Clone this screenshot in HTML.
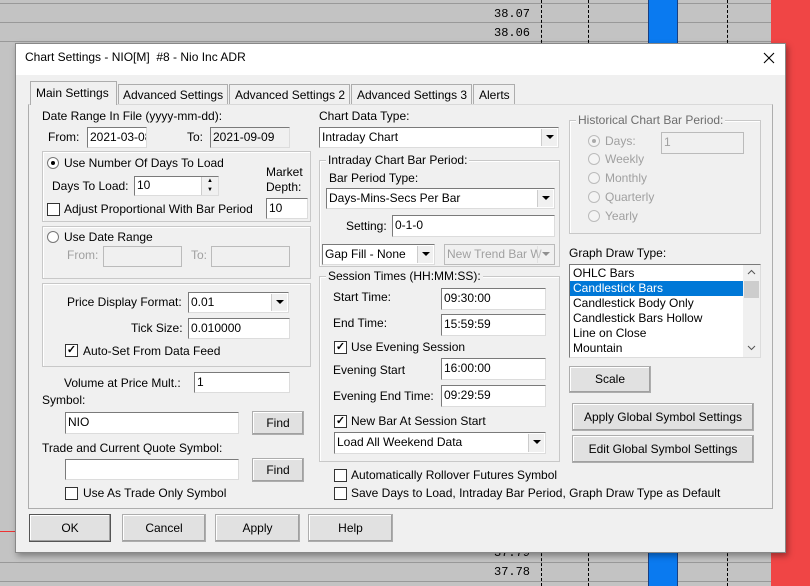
<!DOCTYPE html>
<html><head><meta charset="utf-8"><style>
*{box-sizing:border-box;margin:0;padding:0}
body{width:810px;height:586px;position:relative;overflow:hidden;background:#c3c3c3;font-family:"Liberation Sans",Arial,sans-serif;font-size:12px;color:#000}
.a{position:absolute}
.t{position:absolute;white-space:nowrap;line-height:15px}
.g{color:#a0a0a0}
.in{position:absolute;background:#fff;border:1px solid;border-color:#7a7a7a #dcdcdc #dcdcdc #7a7a7a;padding:2px 2px;line-height:15px;white-space:nowrap;overflow:hidden}
.dis{background:#f0f0f0}
.btn{position:absolute;background:#e1e1e1;border:1px solid #adadad;box-shadow:inset -1px -1px 0 #a0a0a0,inset 1px 1px 0 #fff;text-align:center;white-space:nowrap}
.grp{position:absolute;border:1px solid #c8c8c8;box-shadow:inset 1px 1px 0 #fff}
.lg{position:absolute;background:#f0f0f0;padding:0 2px;top:-8px;left:6px;line-height:15px;white-space:nowrap}
.cb{position:absolute;width:13px;height:13px;border:1px solid #333;background:#fff;font-size:11px;line-height:11px;text-align:center;font-weight:bold}
.rd{position:absolute;width:12px;height:12px;border-radius:50%;border:1px solid #777;background:#fff}
.rd.on::after{content:"";position:absolute;left:3px;top:3px;width:4px;height:4px;border-radius:50%;background:#000}
.rd.gr{border-color:#bbb;background:#f4f4f4}
.rd.gr.on::after{background:#aaa}
.dd{position:absolute;right:1px;top:1px;bottom:1px;width:16px;background:#f0f0f0;border-left:1px solid #ccc}
.dd::after{content:"";position:absolute;left:4px;top:6px;border:4px solid transparent;border-top:4px solid #000}
.hl{position:absolute;left:0;width:810px;height:1px;background:#999}
</style></head><body>
<div class="hl" style="top:3px"></div><div class="hl" style="top:22px"></div><div class="hl" style="top:41px"></div>
<div class="hl" style="top:562px"></div><div class="hl" style="top:581px"></div>
<div class="a" style="left:648px;top:0;width:30px;height:586px;background:#0a7af0;border-left:1px solid #1a3f80;border-right:1px solid #1a3f80"></div>
<div class="a" style="left:771px;top:0;width:39px;height:586px;background:#f04545"></div>
<div class="a" style="left:541px;top:0;height:586px;border-left:1px dashed #000"></div>
<div class="a" style="left:588px;top:0;height:586px;border-left:1px dashed #000"></div>
<div class="a" style="left:727px;top:0;height:586px;border-left:1px dashed #000"></div>
<div class="t" style="left:494px;top:7px;font-family:'Liberation Mono',monospace;font-size:12px">38.07</div>
<div class="t" style="left:494px;top:26px;font-family:'Liberation Mono',monospace;font-size:12px">38.06</div>
<div class="t" style="left:494px;top:546px;font-family:'Liberation Mono',monospace;font-size:12px">37.79</div>
<div class="t" style="left:494px;top:565px;font-family:'Liberation Mono',monospace;font-size:12px">37.78</div>
<div class="a" style="left:0;top:531px;width:15px;height:1px;background:#e33"></div>

<div class="a" style="left:15px;top:43px;width:771px;height:510px;background:#f0f0f0;border:1px solid #888;box-shadow:2px 3px 6px rgba(0,0,0,.35)">
 <div class="a" style="left:0;top:0;width:769px;height:31px;background:#fff"></div>
</div>
<div class="t" style="left:25px;top:50px;font-size:12px">Chart Settings - NIO[M]&nbsp; #8 - Nio Inc ADR</div>
<svg class="a" style="left:763px;top:52px" width="12" height="12"><path d="M1 1L11 11M11 1L1 11" stroke="#000" stroke-width="1.1"/></svg>

<div class="a" style="left:28px;top:104px;width:745px;height:405px;border:1px solid #adadad;border-top-color:#d9d9d9;background:#f0f0f0"></div>
<div class="a" style="left:30px;top:81px;width:87px;height:24px;background:#f0f0f0;border:1px solid #adadad;border-bottom:none"></div>
<div class="t" style="left:36px;top:86px;font-size:12px">Main Settings</div>
<div class="a" style="left:118px;top:84px;width:110px;height:20px;border:1px solid #adadad;border-bottom:none;background:#f0f0f0"></div>
<div class="t" style="left:123px;top:88px;font-size:12px">Advanced Settings</div>
<div class="a" style="left:229px;top:84px;width:121px;height:20px;border:1px solid #adadad;border-bottom:none"></div>
<div class="t" style="left:235px;top:88px;font-size:12px">Advanced Settings 2</div>
<div class="a" style="left:351px;top:84px;width:121px;height:20px;border:1px solid #adadad;border-bottom:none"></div>
<div class="t" style="left:357px;top:88px;font-size:12px">Advanced Settings 3</div>
<div class="a" style="left:473px;top:84px;width:42px;height:20px;border:1px solid #adadad;border-bottom:none"></div>
<div class="t" style="left:479px;top:88px;font-size:12px">Alerts</div>

<div class="t" style="left:42px;top:109px">Date Range In File (yyyy-mm-dd):</div>
<div class="t" style="left:48px;top:130px">From:</div>
<div class="in" style="left:87px;top:127px;width:60px;height:21px">2021-03-08</div>
<div class="t" style="left:187px;top:130px">To:</div>
<div class="in dis" style="left:210px;top:127px;width:80px;height:21px">2021-09-09</div>

<div class="grp" style="left:42px;top:151px;width:269px;height:71px"></div>
<div class="rd on" style="left:47px;top:157px"></div>
<div class="t" style="left:64px;top:156px">Use Number Of Days To Load</div>
<div class="t" style="left:52px;top:179px">Days To Load:</div>
<div class="in" style="left:134px;top:176px;width:85px;height:20px;padding-top:1px">10</div>
<div class="a" style="left:201px;top:177px;width:17px;height:18px;background:#f0f0f0;border-left:1px solid #ccc;font-size:6px;line-height:9px;text-align:center">▲<br>▼</div>
<div class="t" style="left:266px;top:165px">Market</div>
<div class="t" style="left:266px;top:180px">Depth:</div>
<div class="in" style="left:266px;top:198px;width:42px;height:21px">10</div>
<div class="cb" style="left:47px;top:203px"></div>
<div class="t" style="left:64px;top:202px">Adjust Proportional With Bar Period</div>

<div class="grp" style="left:42px;top:226px;width:269px;height:53px"></div>
<div class="rd" style="left:47px;top:231px"></div>
<div class="t" style="left:64px;top:230px">Use Date Range</div>
<div class="t g" style="left:67px;top:248px">From:</div>
<div class="in dis" style="left:103px;top:246px;width:79px;height:21px;border-color:#bbb"></div>
<div class="t g" style="left:191px;top:248px">To:</div>
<div class="in dis" style="left:211px;top:246px;width:79px;height:21px;border-color:#bbb"></div>

<div class="grp" style="left:42px;top:283px;width:269px;height:84px"></div>
<div class="t" style="left:67px;top:295px">Price Display Format:</div>
<div class="in" style="left:188px;top:292px;width:101px;height:21px">0.01<div class="dd"></div></div>
<div class="t" style="left:131px;top:321px">Tick Size:</div>
<div class="in" style="left:188px;top:318px;width:102px;height:21px">0.010000</div>
<div class="cb" style="left:65px;top:344px">✓</div>
<div class="t" style="left:83px;top:344px">Auto-Set From Data Feed</div>

<div class="t" style="left:64px;top:376px">Volume at Price Mult.:</div>
<div class="in" style="left:194px;top:372px;width:96px;height:21px">1</div>
<div class="t" style="left:42px;top:393px">Symbol:</div>
<div class="in" style="left:65px;top:412px;width:174px;height:22px">NIO</div>
<div class="btn" style="left:252px;top:411px;width:52px;height:24px;line-height:22px">Find</div>
<div class="t" style="left:42px;top:441px">Trade and Current Quote Symbol:</div>
<div class="in" style="left:65px;top:459px;width:174px;height:21px"></div>
<div class="btn" style="left:252px;top:458px;width:52px;height:24px;line-height:22px">Find</div>
<div class="cb" style="left:65px;top:487px"></div>
<div class="t" style="left:83px;top:486px">Use As Trade Only Symbol</div>

<div class="t" style="left:319px;top:109px">Chart Data Type:</div>
<div class="in" style="left:319px;top:127px;width:240px;height:21px">Intraday Chart<div class="dd"></div></div>
<div class="grp" style="left:319px;top:160px;width:241px;height:107px"><div class="lg">Intraday Chart Bar Period:</div></div>
<div class="t" style="left:329px;top:171px">Bar Period Type:</div>
<div class="in" style="left:326px;top:188px;width:229px;height:21px">Days-Mins-Secs Per Bar<div class="dd"></div></div>
<div class="t" style="left:346px;top:219px">Setting:</div>
<div class="in" style="left:392px;top:215px;width:163px;height:22px">0-1-0</div>
<div class="in" style="left:322px;top:244px;width:113px;height:21px">Gap Fill - None<div class="dd"></div></div>
<div class="in dis g" style="left:444px;top:244px;width:111px;height:21px;border-color:#bbb">New Trend Bar W<div class="dd" style="opacity:.4"></div></div>

<div class="grp" style="left:319px;top:276px;width:241px;height:186px"><div class="lg">Session Times (HH:MM:SS):</div></div>
<div class="t" style="left:333px;top:290px">Start Time:</div>
<div class="in" style="left:441px;top:288px;width:105px;height:22px">09:30:00</div>
<div class="t" style="left:333px;top:316px">End Time:</div>
<div class="in" style="left:441px;top:314px;width:105px;height:22px">15:59:59</div>
<div class="cb" style="left:334px;top:341px">✓</div>
<div class="t" style="left:351px;top:340px">Use Evening Session</div>
<div class="t" style="left:333px;top:363px">Evening Start</div>
<div class="in" style="left:441px;top:358px;width:105px;height:22px">16:00:00</div>
<div class="t" style="left:333px;top:389px">Evening End Time:</div>
<div class="in" style="left:441px;top:385px;width:105px;height:22px">09:29:59</div>
<div class="cb" style="left:334px;top:415px">✓</div>
<div class="t" style="left:351px;top:414px">New Bar At Session Start</div>
<div class="in" style="left:334px;top:432px;width:212px;height:22px">Load All Weekend Data<div class="dd"></div></div>
<div class="cb" style="left:334px;top:469px"></div>
<div class="t" style="left:351px;top:468px">Automatically Rollover Futures Symbol</div>
<div class="cb" style="left:334px;top:487px"></div>
<div class="t" style="left:351px;top:486px">Save Days to Load, Intraday Bar Period, Graph Draw Type as Default</div>

<div class="grp" style="left:569px;top:120px;width:192px;height:114px"><div class="lg" style="color:#6d6d6d">Historical Chart Bar Period:</div></div>
<div class="rd gr on" style="left:588px;top:135px"></div><div class="t g" style="left:605px;top:134px">Days:</div>
<div class="in dis g" style="left:661px;top:132px;width:83px;height:22px;border-color:#bbb">1</div>
<div class="rd gr" style="left:588px;top:153px"></div><div class="t g" style="left:605px;top:152px">Weekly</div>
<div class="rd gr" style="left:588px;top:172px"></div><div class="t g" style="left:605px;top:171px">Monthly</div>
<div class="rd gr" style="left:588px;top:191px"></div><div class="t g" style="left:605px;top:190px">Quarterly</div>
<div class="rd gr" style="left:588px;top:210px"></div><div class="t g" style="left:605px;top:209px">Yearly</div>

<div class="t" style="left:569px;top:246px">Graph Draw Type:</div>
<div class="a" style="left:569px;top:264px;width:192px;height:94px;background:#fff;border:1px solid;border-color:#7a7a7a #dcdcdc #dcdcdc #7a7a7a"></div>
<div class="a" style="left:570px;top:281px;width:173px;height:15px;background:#0078d7"></div>
<div class="a" style="left:743px;top:265px;width:17px;height:92px;background:#f0f0f0"></div>
<div class="a" style="left:744px;top:281px;width:15px;height:17px;background:#cdcdcd"></div>
<svg class="a" style="left:747px;top:269px" width="9" height="6"><path d="M1 5L4.5 1.5L8 5" stroke="#555" fill="none"/></svg>
<svg class="a" style="left:747px;top:345px" width="9" height="6"><path d="M1 1L4.5 4.5L8 1" stroke="#555" fill="none"/></svg>
<div class="t" style="left:573px;top:266px">OHLC Bars</div>
<div class="t" style="left:573px;top:281px;color:#fff">Candlestick Bars</div>
<div class="t" style="left:573px;top:296px">Candlestick Body Only</div>
<div class="t" style="left:573px;top:311px">Candlestick Bars Hollow</div>
<div class="t" style="left:573px;top:326px">Line on Close</div>
<div class="t" style="left:573px;top:341px">Mountain</div>
<div class="btn" style="left:569px;top:366px;width:82px;height:27px;line-height:25px">Scale</div>
<div class="btn" style="left:572px;top:403px;width:182px;height:28px;line-height:26px">Apply Global Symbol Settings</div>
<div class="btn" style="left:572px;top:435px;width:182px;height:28px;line-height:26px">Edit Global Symbol Settings</div>

<div class="btn" style="left:29px;top:514px;width:82px;height:28px;line-height:26px;border-color:#555">OK</div>
<div class="btn" style="left:122px;top:514px;width:84px;height:28px;line-height:26px">Cancel</div>
<div class="btn" style="left:215px;top:514px;width:85px;height:28px;line-height:26px">Apply</div>
<div class="btn" style="left:308px;top:514px;width:85px;height:28px;line-height:26px">Help</div>
</body></html>
